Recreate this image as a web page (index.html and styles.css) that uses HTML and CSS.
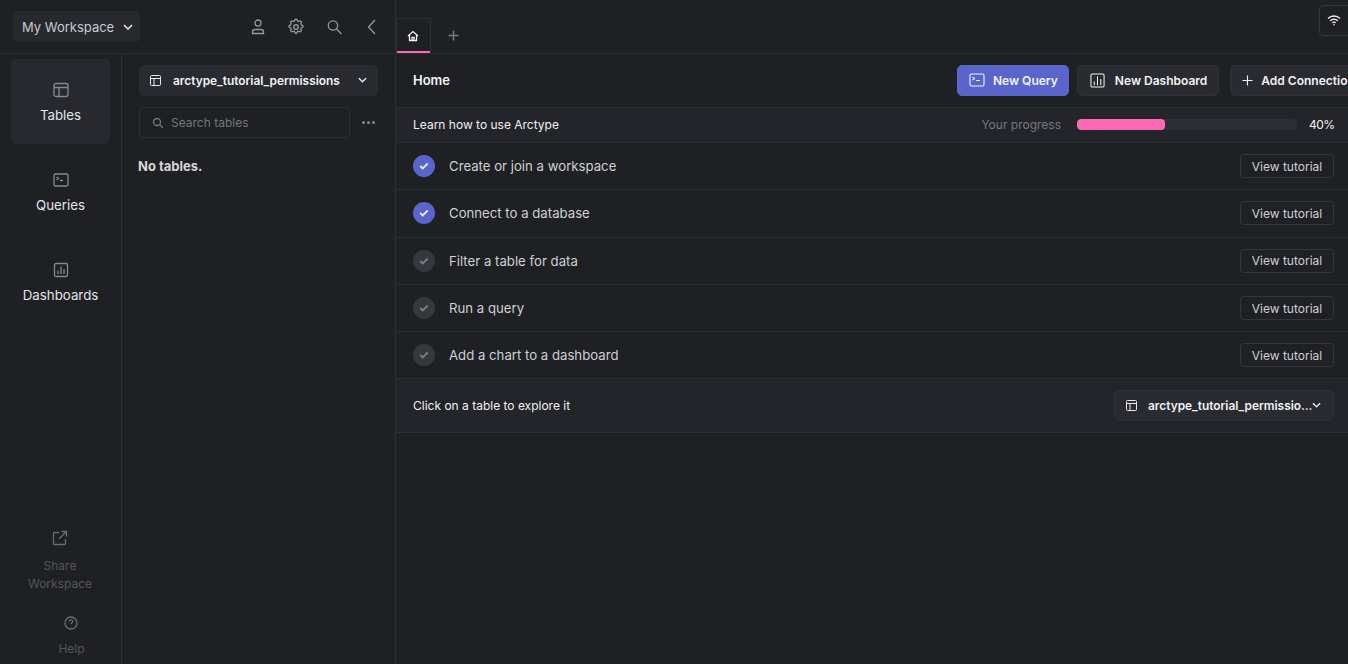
FILE: index.html
```html
<!DOCTYPE html>
<html>
    <head>
        <meta charset="UTF-8">
        <title>Arctype</title>
        <link rel="stylesheet" href="styles.css">
    </head>
    <body>
        <div class="app">
            <!-- left side -->
            <aside class="side">
                <header class="side-top">
                    <div class="ws">
                        <span>My Workspace</span>
                        <svg class="chev" width="10" height="6" viewBox="0 0 10 6"><path d="M1 1l4 4 4-4"/></svg>
                    </div>
                    <div class="top-icons">
                        <svg width="18" height="18" viewBox="0 0 18 18"><circle cx="9" cy="5" r="3"/><path d="M3.500 15.500v-1.500a2.500 2.500 0 0 1 2.500-2.500h6a2.500 2.500 0 0 1 2.500 2.500v1.500z"/></svg>
                        <svg class="gear" width="18" height="18" viewBox="0 0 24 24"><circle cx="12" cy="12" r="3"/><path d="M10.300 3.300a1.700 1.700 0 0 1 3.400 0 1.700 1.700 0 0 0 2.600 1.100 1.700 1.700 0 0 1 2.400 2.400 1.700 1.700 0 0 0 1.100 2.600 1.700 1.700 0 0 1 0 3.400 1.700 1.700 0 0 0-1.100 2.600 1.700 1.700 0 0 1-2.400 2.400 1.700 1.700 0 0 0-2.600 1.100 1.700 1.700 0 0 1-3.400 0 1.700 1.700 0 0 0-2.600-1.100 1.700 1.700 0 0 1-2.400-2.400 1.700 1.700 0 0 0-1.100-2.600 1.700 1.700 0 0 1 0-3.400 1.700 1.700 0 0 0 1.100-2.600 1.700 1.700 0 0 1 2.400-2.400 1.700 1.700 0 0 0 2.600-1.100z"/></svg>
                        <svg width="18" height="18" viewBox="0 0 18 18"><circle cx="8" cy="7.500" r="4.700"/><path d="M11.500 11l5 5"/></svg>
                        <svg width="18" height="18" viewBox="0 0 18 18"><path d="M12 2L5.500 9l6.500 7"/></svg>
                    </div>
                </header>
                <div class="side-body">
                    <nav class="nav">
                        <div class="nav-list">
                            <a class="nav-item active">
                                <svg class="nav-ico" width="16" height="16" viewBox="0 0 16 16"><rect x="1" y="1.500" width="14" height="13" rx="2"/><path d="M1 5.500h14M6 5.500v9"/></svg>
                                <span>Tables</span>
                            </a>
                            <a class="nav-item">
                                <svg class="nav-ico" width="16" height="14" viewBox="0 0 16 14"><rect x="1" y="1" width="14" height="12" rx="1.500"/><path d="M3.500 4l2 1.500-2 1.500M7 7.500h3"/></svg>
                                <span>Queries</span>
                            </a>
                            <a class="nav-item">
                                <svg class="nav-ico" width="16" height="16" viewBox="0 0 16 16"><rect x="1.500" y="1.500" width="13" height="13" rx="1.500"/><path d="M5 12V8.500M8 12V4.500M11 12V7"/></svg>
                                <span>Dashboards</span>
                            </a>
                        </div>
                        <div class="nav-low">
                            <a class="low-item">
                                <svg width="16" height="16" viewBox="0 0 16 16"><path d="M7 2.500H2.500a1 1 0 0 0-1 1v10a1 1 0 0 0 1 1h10a1 1 0 0 0 1-1V9M9.500 1.500h5v5M14.500 1.500L7 9"/></svg>
                                <span>Share<br>Workspace</span>
                            </a>
                            <a class="low-item help">
                                <svg width="14" height="14" viewBox="0 0 14 14"><circle cx="7" cy="7" r="6"/><path d="M5.300 5.500a1.700 1.700 0 1 1 2.500 1.500c-.5.300-.8.600-.8 1.200M7 10v.5"/></svg>
                                <span>Help</span>
                            </a>
                        </div>
                    </nav>
                    <section class="tables">
                        <div class="select">
                            <svg class="tbl-ico" width="11" height="11" viewBox="0 0 11 11"><rect x=".5" y=".5" width="10" height="10" rx="1"/><path d="M.5 3.500h10M4 3.500v7"/></svg>
                            <span class="select-name">arctype_tutorial_permissions</span>
                            <svg class="chev" width="9" height="6" viewBox="0 0 10 6"><path d="M1 1l4 4 4-4"/></svg>
                        </div>
                        <div class="search-row">
                            <div class="search">
                                <svg width="12" height="12" viewBox="0 0 12 12"><circle cx="5" cy="5" r="3.500"/><path d="M7.500 7.500L11 11"/></svg>
                                <span>Search tables</span>
                            </div>
                            <div class="dots"><i></i><i></i><i></i></div>
                        </div>
                        <p class="empty">No tables.</p>
                    </section>
                </div>
            </aside>

            <!-- right side -->
            <main class="main">
                <div class="tabs">
                    <div class="tab">
                        <svg width="12" height="12" viewBox="0 0 12 12"><path d="M1 6l5-4.500L11 6M2.500 5v5.500h7V5M5 10.500V7.500h2v3"/></svg>
                    </div>
                    <svg class="plus" width="11" height="11" viewBox="0 0 11 11"><path d="M5.500 .5v10M.5 5.500h10"/></svg>
                    <div class="wifi">
                        <svg width="14" height="11" viewBox="0 0 14 11"><path d="M1 3.500a8.500 8.500 0 0 1 12 0M3.200 5.800a5.400 5.400 0 0 1 7.600 0M5.300 7.800a2.400 2.400 0 0 1 3.400 0"/><circle class="dot" cx="7" cy="9.800" r=".8"/></svg>
                    </div>
                </div>
                <div class="home-bar">
                    <h1>Home</h1>
                    <div class="btns">
                        <a class="btn primary">
                            <svg width="16" height="14" viewBox="0 0 16 14"><rect x="1" y="1" width="14" height="12" rx="1.500"/><path d="M3.500 4l2 1.500-2 1.500M7 7.500h4"/></svg>
                            New Query
                        </a>
                        <a class="btn dash">
                            <svg width="15" height="15" viewBox="0 0 16 16"><rect x="1" y="1" width="14" height="14" rx="1.500"/><path d="M4.500 13V9M8 13V3.500M11.500 13V6.500"/></svg>
                            New Dashboard
                        </a>
                        <a class="btn add">
                            <svg width="11" height="11" viewBox="0 0 11 11"><path d="M5.500 .5v10M.5 5.500h10"/></svg>
                            Add Connection
                        </a>
                    </div>
                </div>
                <div class="learn">
                    <span>Learn how to use Arctype</span>
                    <div class="progress">
                        <span class="progress-label">Your progress</span>
                        <div class="bar"><div class="bar-fill" style="width: 40%"></div></div>
                        <span class="progress-num">40%</span>
                    </div>
                </div>
                <ul class="steps">
                    <li class="step done">
                        <span class="check"><svg width="10" height="8" viewBox="0 0 10 8"><path d="M1.200 4l2.500 2.500 5-5"/></svg></span>
                        <span class="step-name">Create or join a workspace</span>
                        <a class="view">View tutorial</a>
                    </li>
                    <li class="step done">
                        <span class="check"><svg width="10" height="8" viewBox="0 0 10 8"><path d="M1.200 4l2.500 2.500 5-5"/></svg></span>
                        <span class="step-name">Connect to a database</span>
                        <a class="view">View tutorial</a>
                    </li>
                    <li class="step">
                        <span class="check"><svg width="10" height="8" viewBox="0 0 10 8"><path d="M1.200 4l2.500 2.500 5-5"/></svg></span>
                        <span class="step-name">Filter a table for data</span>
                        <a class="view">View tutorial</a>
                    </li>
                    <li class="step">
                        <span class="check"><svg width="10" height="8" viewBox="0 0 10 8"><path d="M1.200 4l2.500 2.500 5-5"/></svg></span>
                        <span class="step-name">Run a query</span>
                        <a class="view">View tutorial</a>
                    </li>
                    <li class="step">
                        <span class="check"><svg width="10" height="8" viewBox="0 0 10 8"><path d="M1.200 4l2.500 2.500 5-5"/></svg></span>
                        <span class="step-name">Add a chart to a dashboard</span>
                        <a class="view">View tutorial</a>
                    </li>
                </ul>
                <div class="explore">
                    <span>Click on a table to explore it</span>
                    <div class="select explore-select">
                        <svg class="tbl-ico" width="11" height="11" viewBox="0 0 11 11"><rect x=".5" y=".5" width="10" height="10" rx="1"/><path d="M.5 3.500h10M4 3.500v7"/></svg>
                        <span class="select-name">arctype_tutorial_permissions</span>
                        <svg class="chev" width="9" height="6" viewBox="0 0 10 6"><path d="M1 1l4 4 4-4"/></svg>
                    </div>
                </div>
            </main>
        </div>
    </body>
</html>
```

FILE: styles.css
```css
*{
    box-sizing: border-box;
}
html, body{
    margin: 0;
    height: 100%;
    overflow: hidden;
}
body{
    background: #1f2024;
    color: #e8e8ea;
    font-family: Inter, "Noto Sans", sans-serif;
    font-size: 12px;
}
svg{
    fill: none;
    stroke: currentColor;
    stroke-width: 1.3;
    flex: none;
}
.app{
    display: flex;
    height: 664px;
}
/* left side */
.side{
    width: 396px;
    flex: none;
    border-right: 1px solid #2d2e33;
    display: flex;
    flex-direction: column;
}
.side-top{
    height: 54px;
    flex: none;
    border-bottom: 1px solid #2d2e33;
    display: flex;
    align-items: center;
    justify-content: space-between;
    padding: 0 14px 0 13px;
}
.ws{
    width: 127px;
    height: 31px;
    background: #27292e;
    border-radius: 5px;
    padding: 0 7px 0 9px;
    display: flex;
    align-items: center;
    justify-content: space-between;
    font-size: 13px;
    color: #c9cbd0;
}
.chev{
    stroke: #e4e4e6;
    stroke-width: 1.6;
}
.top-icons{
    display: flex;
    gap: 20px;
    color: #97989c;
}
.gear{
    stroke-width: 1.8;
}
.side-body{
    flex: 1;
    display: flex;
    min-height: 0;
}
.nav{
    width: 122px;
    flex: none;
    border-right: 1px solid #2d2e33;
    padding: 5px 11px 6px;
    display: flex;
    flex-direction: column;
    justify-content: space-between;
}
.nav-list{
    display: flex;
    flex-direction: column;
    gap: 5px;
}
.nav-item{
    height: 85px;
    width: 99px;
    border-radius: 5px;
    display: flex;
    flex-direction: column;
    align-items: center;
    padding-top: 23px;
    font-size: 13.300px;
    color: #e4e5e8;
}
.nav-item span{
    margin-top: 8px;
    line-height: 18px;
}
.nav-item.active{
    background: #27292e;
}
.nav-ico{
    color: #88898e;
    height: 16px;
}
.nav-low{
    display: flex;
    flex-direction: column;
    align-items: center;
    color: #54565c;
    text-align: center;
    line-height: 18px;
}
.low-item{
    display: flex;
    flex-direction: column;
    align-items: center;
    gap: 11px;
    margin-right: 1px;
}
.low-item svg{
    color: #6b6c70;
}
.help{
    margin: 23px 0 0 22px;
    gap: 10px;
}
.tables{
    flex: 1;
    padding: 11px 17px 0 17px;
}
.select{
    height: 31px;
    background: #292b30;
    border-radius: 5px;
    display: flex;
    align-items: center;
    padding: 0 11px 1px;
    font-weight: 600;
    font-size: 11.900px;
    color: #f2f2f4;
}
.select-name{
    flex: 1;
    margin-left: 12px;
    white-space: nowrap;
    overflow: hidden;
    text-overflow: ellipsis;
}
.tbl-ico{
    color: #e8e8ea;
    stroke-width: 1;
}
.search-row{
    display: flex;
    align-items: center;
    margin-top: 11px;
}
.search{
    width: 211px;
    height: 31px;
    border: 1px solid #2d2e33;
    border-radius: 4px;
    display: flex;
    align-items: center;
    gap: 7px;
    padding-left: 12px;
    color: #74767c;
}
.search svg{
    color: #77787c;
}
.dots{
    display: flex;
    gap: 2px;
    margin-left: 12px;
}
.dots i{
    width: 3px;
    height: 3px;
    border-radius: 50%;
    background: #85868a;
}
.empty{
    margin: 20px 0 0 -1px;
    font-weight: 700;
    font-size: 13px;
    color: #d6d6d8;
}
/* right side */
.main{
    flex: 1;
    min-width: 0;
    overflow: hidden;
}
.tabs{
    height: 54px;
    border-bottom: 1px solid #2d2e33;
    padding-top: 18px;
    display: flex;
    position: relative;
}
.tab{
    width: 35px;
    height: 35px;
    border: 1px solid #2d2e33;
    border-bottom: 0;
    box-shadow: inset 0 -2px 0 #ff69b4;
    display: flex;
    align-items: center;
    justify-content: center;
    padding: 0 2px 1px 0;
    color: #f2f2f4;
}
.plus{
    color: #77787c;
    margin: 12px 0 0 17px;
    stroke-width: 1.5;
}
.wifi{
    position: absolute;
    left: 923px;
    top: 5px;
    width: 40px;
    height: 31px;
    border: 1px solid #34353a;
    border-radius: 4px;
    padding: 8px 0 0 7px;
    color: #eee;
}
.wifi .dot{
    fill: currentColor;
    stroke: none;
}
.home-bar{
    height: 54px;
    border-bottom: 1px solid #2d2e33;
    display: flex;
    align-items: center;
    justify-content: space-between;
    padding: 0 0 1px 17px;
}
.home-bar h1{
    margin: 0;
    font-size: 13px;
    font-weight: 600;
    color: #f4f4f6;
}
.btns{
    display: flex;
    gap: 8px;
    flex: none;
    width: 391px;
}
.btn{
    height: 31px;
    background: #292b30;
    border: 1px solid #2f3136;
    border-radius: 5px;
    display: flex;
    align-items: center;
    gap: 10px;
    padding: 0 11px;
    font-size: 12px;
    font-weight: 600;
    white-space: nowrap;
    color: #f2f2f4;
    flex: none;
}
.btn svg{
    stroke-width: 1.1;
}
.btn.primary{
    background: #5a65cc;
    border-color: #5a65cc;
    gap: 8px;
    padding-right: 10px;
}
.btn.dash{
    padding-left: 12px;
}
.btn.add{
    margin-left: 3px;
    gap: 8px;
}
.learn{
    height: 35px;
    background: #24252a;
    border-bottom: 1px solid #2d2e33;
    display: flex;
    align-items: center;
    justify-content: space-between;
    padding: 0 14px 1px 17px;
    color: #f0f0f2;
}
.progress{
    display: flex;
    align-items: center;
}
.progress-label{
    color: #75777c;
    margin-right: 16px;
}
.bar{
    width: 220px;
    height: 11px;
    border-radius: 4px;
    background: #2d2e33;
    overflow: hidden;
}
.bar-fill{
    height: 100%;
    background: #ff69b4;
    border-radius: 4px;
}
.progress-num{
    margin-left: 12px;
    width: 25px;
    letter-spacing: -.5px;
    white-space: nowrap;
}
.steps{
    list-style: none;
    margin: 0;
    padding: 0;
}
.step{
    height: 47.300px;
    border-bottom: 1px solid #2d2e33;
    display: flex;
    align-items: center;
    padding: 0 14px 0 17px;
}
.check{
    width: 22px;
    height: 22px;
    border-radius: 50%;
    background: #37383d;
    color: #7b7c80;
    display: flex;
    align-items: center;
    justify-content: center;
}
.check svg{
    stroke-width: 1.8;
}
.done .check{
    background: #5a65cc;
    color: #e6e8f6;
}
.step-name{
    flex: 1;
    margin-left: 14px;
    font-size: 13.200px;
    color: #cfd0d3;
}
.view{
    width: 94px;
    height: 24px;
    border: 1px solid #34353a;
    border-radius: 4px;
    display: flex;
    align-items: center;
    justify-content: center;
    color: #cfd0d3;
}
.explore{
    height: 53.500px;
    background: #24252a;
    border-bottom: 1px solid #2d2e33;
    display: flex;
    align-items: center;
    justify-content: space-between;
    padding: 0 14px 0 17px;
    color: #f0f0f2;
}
.explore-select{
    width: 220px;
    flex: none;
    border: 1px solid #2f3136;
    padding-right: 12px;
}
.explore-select .select-name{
    margin-left: 11px;
}
.explore-select .chev{
    margin-left: -1px;
}
```
